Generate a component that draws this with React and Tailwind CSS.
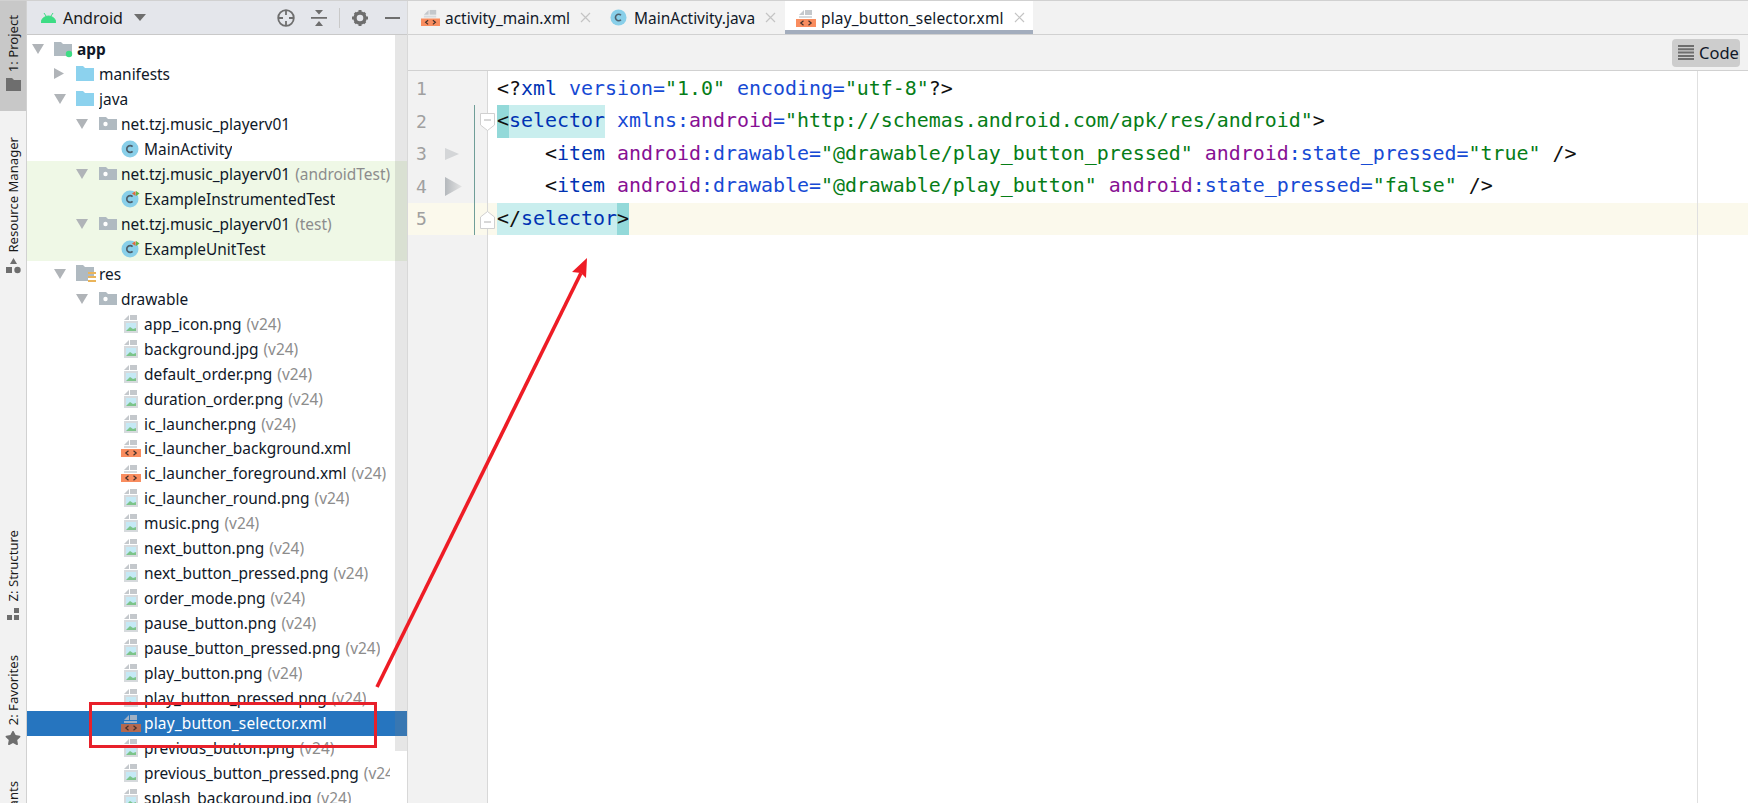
import { FaStar } from "react-icons/fa";

const uiFont = "font-['Noto_Sans','Open_Sans',sans-serif]";

const Tri = ({ dir = "down" }) =>
  dir === "down" ? (
    <svg width="13" height="11" viewBox="0 0 13 11"><path d="M0 1h12L6 11z" fill="#b0b4b8" /></svg>
  ) : (
    <svg width="13" height="11" viewBox="0 0 13 11"><path d="M0 0l10 5.5L0 11z" fill="#b0b4b8" /></svg>
  );

const AppFolder = () => (
  <svg width="20" height="18" viewBox="0 0 20 18">
    <path d="M0 2h7l2 2h9v12H0z" fill="#b0bac1" />
    <circle cx="15" cy="14" r="3.2" fill="#3ddc84" />
  </svg>
);

const BlueFolder = () => (
  <svg width="18" height="15" viewBox="0 0 18 15"><path d="M0 0h7l2 2h9v13H0z" fill="#8cd2ee" /></svg>
);

const PkgFolder = () => (
  <svg className="ml-px" width="18" height="13" viewBox="0 0 18 13">
    <path d="M0 0h7l2 2h9v11H0z" fill="#b0bac1" />
    <circle cx="6.5" cy="7" r="2.2" fill="#fff" />
  </svg>
);

const ResFolder = () => (
  <svg width="20" height="17" viewBox="0 0 20 17">
    <path d="M0 0h7l2 2h9v11H12v3H0z" fill="#b0bac1" />
    <path d="M12 7h8v2h-8zM12 11h8v2h-8zM12 15h8v2h-8z" fill="#eab45a" />
  </svg>
);

const ClassIcon = ({ test, size = 18 }) => (
  <svg width={size} height={size} viewBox="0 0 18 18" className="overflow-visible">
    <circle cx="9" cy="9" r="8.5" fill="#89cfe9" />
    <path d="M11.6 6.6A3.4 3.4 0 1 0 11.6 11.4" fill="none" stroke="#4e5f6b" strokeWidth="1.7" />
    {test && <path d="M11 3.5L14.5 1v5z" fill="#e0693c" />}
    {test && <path d="M15 1l3.5 2.5L15 6z" fill="#62b543" />}
  </svg>
);

const ImageFile = () => (
  <svg className="ml-[3px]" width="14" height="18" viewBox="0 0 14 18">
    <path d="M0 5l5-5v5z" fill="#c4c8cc" />
    <path d="M6 0h7v5H6z" fill="#c4c8cc" />
    <path d="M0 6h14v12H0z" fill="#d6dadd" />
    <path d="M2 8h10v8H2z" fill="#c5e9f5" />
    <path d="M2 16l4-4 3 2 3-1v3z" fill="#7cc48a" />
  </svg>
);

const XmlFile = ({ selected, size = 20 }) => (
  <svg width={size} height={size * 0.9} viewBox="0 0 20 18">
    <path d="M3 6l5-5v5z" fill={selected ? "#9fb0c4" : "#c4c8cc"} />
    <path d="M9 1h7v5H9z" fill={selected ? "#9fb0c4" : "#c4c8cc"} />
    <path d="M3 7h13v2H3z" fill={selected ? "#9fb0c4" : "#d6dadd"} />
    <path d="M0 10h20v8H0z" fill={selected ? "#b5694f" : "#f98d5f"} />
    <path d="M7.5 11.8L4.8 14l2.7 2.2M12.5 11.8l2.7 2.2-2.7 2.2" fill="none" stroke="#43302b" strokeWidth="1.2" />
  </svg>
);

const icons = {
  app: <AppFolder />,
  blue: <BlueFolder />,
  pkg: <PkgFolder />,
  res: <ResFolder />,
  cls: <ClassIcon />,
  test: <ClassIcon test />,
  img: <ImageFile />,
  xml: <XmlFile />,
  xmlSel: <XmlFile selected />,
};

const rows = [
  { d: 0, a: "down", i: "app", t: "app", bold: true },
  { d: 1, a: "right", i: "blue", t: "manifests" },
  { d: 1, a: "down", i: "blue", t: "java" },
  { d: 2, a: "down", i: "pkg", t: "net.tzj.music_playerv01" },
  { d: 3, i: "cls", t: "MainActivity" },
  { d: 2, a: "down", i: "pkg", t: "net.tzj.music_playerv01", h: "(androidTest)", green: true },
  { d: 3, i: "test", t: "ExampleInstrumentedTest", green: true },
  { d: 2, a: "down", i: "pkg", t: "net.tzj.music_playerv01", h: "(test)", green: true },
  { d: 3, i: "test", t: "ExampleUnitTest", green: true },
  { d: 1, a: "down", i: "res", t: "res" },
  { d: 2, a: "down", i: "pkg", t: "drawable" },
  { d: 3, i: "img", t: "app_icon.png", h: "(v24)" },
  { d: 3, i: "img", t: "background.jpg", h: "(v24)" },
  { d: 3, i: "img", t: "default_order.png", h: "(v24)" },
  { d: 3, i: "img", t: "duration_order.png", h: "(v24)" },
  { d: 3, i: "img", t: "ic_launcher.png", h: "(v24)" },
  { d: 3, i: "xml", t: "ic_launcher_background.xml" },
  { d: 3, i: "xml", t: "ic_launcher_foreground.xml", h: "(v24)" },
  { d: 3, i: "img", t: "ic_launcher_round.png", h: "(v24)" },
  { d: 3, i: "img", t: "music.png", h: "(v24)" },
  { d: 3, i: "img", t: "next_button.png", h: "(v24)" },
  { d: 3, i: "img", t: "next_button_pressed.png", h: "(v24)" },
  { d: 3, i: "img", t: "order_mode.png", h: "(v24)" },
  { d: 3, i: "img", t: "pause_button.png", h: "(v24)" },
  { d: 3, i: "img", t: "pause_button_pressed.png", h: "(v24)" },
  { d: 3, i: "img", t: "play_button.png", h: "(v24)" },
  { d: 3, i: "img", t: "play_button_pressed.png", h: "(v24)" },
  { d: 3, i: "xmlSel", t: "play_button_selector.xml", selected: true },
  { d: 3, i: "img", t: "previous_button.png", h: "(v24)" },
  { d: 3, i: "img", t: "previous_button_pressed.png", h: "(v24)" },
  { d: 3, i: "img", t: "splash_background.jpg", h: "(v24)" },
];

const indent = ["pl-[5px]", "pl-[27px]", "pl-[49px]", "pl-[72px]"];

const TreeRow = ({ row }) => {
  let bg = "";
  if (row.green) bg = "bg-[#eff8e6]";
  if (row.selected) bg = "bg-[#2675bf] text-white tracking-[0.17px]";
  return (
    <div className={`flex h-[24.98px] shrink-0 items-center whitespace-nowrap pr-[17px] ${indent[row.d]} ${bg}`}>
      <div className="flex w-[22px] shrink-0 items-center">{row.a && <Tri dir={row.a} />}</div>
      <div className="flex w-[23px] shrink-0 items-center">{icons[row.i]}</div>
      <div className="min-w-0 overflow-hidden leading-[24px]">
        <span className={row.bold ? "font-bold" : ""}>{row.t}</span>
        {row.h && <span className="ml-[5px] text-[#8c8c8c]">{row.h}</span>}
      </div>
    </div>
  );
};

const StripeLabel = ({ children }) => (
  <div className="rotate-180 whitespace-nowrap text-[13.1px] leading-[26px] text-[#1a1a1a] [writing-mode:vertical-rl]">{children}</div>
);

const Stripe = () => (
  <div className="flex h-full w-[27px] shrink-0 flex-col overflow-hidden border-r border-[#d1d1d1] bg-[#f2f2f2]">
    <div className="flex h-[110px] shrink-0 flex-col items-center bg-[#c8c8c8] pt-[14px]">
      <StripeLabel>1: Project</StripeLabel>
      <svg className="mt-[6px]" width="15" height="13" viewBox="0 0 15 13"><path d="M0 0h6l2 2h7v11H0z" fill="#6e6e6e" /></svg>
    </div>
    <div className="mt-[26px] flex shrink-0 flex-col items-center">
      <StripeLabel>Resource Manager</StripeLabel>
      <svg className="mt-[5px]" width="15" height="16" viewBox="0 0 15 16">
        <path d="M7.5 0l3.5 6H4z" fill="#6e6e6e" />
        <path d="M0 9h6v6H0z" fill="#6e6e6e" />
        <circle cx="11.5" cy="12" r="3.2" fill="#6e6e6e" />
      </svg>
    </div>
    <div className="mt-[256px] flex shrink-0 flex-col items-center">
      <StripeLabel>Z: Structure</StripeLabel>
      <svg className="mt-[7px]" width="13" height="12" viewBox="0 0 13 12">
        <path d="M7 0h5v5H7zM0 7h5v5H0zM7 7h5v5H7z" fill="#6e6e6e" />
      </svg>
    </div>
    <div className="mt-[35px] flex shrink-0 flex-col items-center">
      <StripeLabel>2: Favorites</StripeLabel>
      <FaStar className="mt-[5px] text-[#6e6e6e]" size={16} />
    </div>
    <div className="mt-[35px] flex shrink-0 flex-col items-center">
      <StripeLabel>Build Variants</StripeLabel>
    </div>
  </div>
);

const ProjectHeader = () => (
  <div className="flex h-[34px] shrink-0 items-center border-b border-[#c9c9c9] bg-[#e4e6eb] pl-[14px] text-[16px] leading-[24px] text-[#1a1a1a]">
    <svg width="15" height="10" viewBox="0 0 15 10"><path d="M0 10a7.5 7 0 0 1 15 0zM3 0l2 3M12 0l-2 3" fill="#3ddc84" stroke="#3ddc84" /></svg>
    <span className="ml-[7px]">Android</span>
    <svg className="ml-[11px]" width="12" height="7" viewBox="0 0 12 7"><path d="M0 0h12L6 7z" fill="#6e6e6e" /></svg>
    <svg className="ml-[131px]" width="18" height="18" viewBox="0 0 18 18" fill="none" stroke="#6e6e6e" strokeWidth="1.8">
      <circle cx="9" cy="9" r="7.8" />
      <path d="M9 1v5M9 12v5M1 9h5M12 9h5" />
    </svg>
    <svg className="ml-[16px]" width="16" height="16" viewBox="0 0 16 16" fill="#6e6e6e">
      <path d="M4 0h8L8 4.5zM0 7h16v1.8H0zM8 11l4 5H4z" />
    </svg>
    <div className="ml-[12px] h-[20px] w-px bg-[#c9c9c9]" />
    <svg className="ml-[12px]" width="16" height="16" viewBox="0 0 16 16">
      <circle cx="8" cy="8" r="5" fill="none" stroke="#6e6e6e" strokeWidth="3.4" />
      <path d="M6.5 0h3v3h-3zM6.5 13h3v3h-3zM0 6.5h3v3H0zM13 6.5h3v3h-3zM1.8 3.8l2-2 2 2-2 2zM10.2 3.8l2-2 2 2-2 2zM1.8 12.2l2-2 2 2-2 2zM10.2 12.2l2-2 2 2-2 2z" fill="#6e6e6e" />
    </svg>
    <div className="ml-[17px] h-[2px] w-[15px] bg-[#6e6e6e]" />
  </div>
);

const ProjectPanel = () => (
  <div className={`relative flex h-full w-[381px] shrink-0 flex-col overflow-hidden border-r border-[#d8d8d8] bg-white text-[15.45px] text-[#101828] ${uiFont}`}>
    <ProjectHeader />
    <div className="flex flex-col overflow-hidden pt-[1.5px]">
      {rows.map((row, i) => (
        <TreeRow key={i} row={row} />
      ))}
    </div>
    {/* scrollbar track */}
    <div className="absolute right-0 top-[34px] h-[716px] w-[12px] bg-[#80808033]" />
  </div>
);

const Tab = ({ icon, label, active, className }) => (
  <div className={`flex h-full items-center ${active ? "border-b-[4px] border-[#a3adbd] bg-white pt-[4px] tracking-[0.17px]" : ""} ${className}`}>
    {icon}
    <span className="ml-[5px] text-[15.45px] leading-[24px] text-[#101828]">{label}</span>
    <svg className="ml-[10px]" width="11" height="11" viewBox="0 0 11 11" stroke="#c4c4c4" strokeWidth="1.2"><path d="M1 1l9 9M10 1l-9 9" /></svg>
  </div>
);

const Tabs = () => (
  <div className="flex h-[34px] shrink-0 border-b border-[#d1d1d1] bg-[#f2f2f2]">
    <Tab className="pl-[13px]" icon={<XmlFile size={19} />} label="activity_main.xml" />
    <Tab className="pl-[19px]" icon={<span className="mr-[2px] flex"><ClassIcon size={17} /></span>} label="MainActivity.java" />
    <Tab active className="ml-[9px] pl-[11px] pr-[8px]" icon={<XmlFile size={20} />} label="play_button_selector.xml" />
  </div>
);

const Toolbar = () => (
  <div className="flex h-[36px] shrink-0 items-center justify-end border-b border-[#d1d1d1] bg-[#f2f2f2] pr-[8px]">
    <div className="flex h-[28px] w-[68px] items-center gap-[5px] rounded-[4px] bg-[#cdcdcd] pl-[6px] text-[16.5px] leading-[24px] text-[#101828]">
      <svg width="16" height="15" viewBox="0 0 16 15" fill="#6e6e6e"><path d="M0 0h16v2H0zM0 3.3h16v2H0zM0 6.6h16v2H0zM0 9.9h16v2H0zM0 13h16v2H0z" /></svg>
      Code
    </div>
  </div>
);

const Gray = ({ children }) => <span className="text-[#101010]">{children}</span>;
const Kw = ({ children }) => <span className="text-[#0033b3]">{children}</span>;
const Attr = ({ children }) => <span className="text-[#174ad4]">{children}</span>;
const Ns = ({ children }) => <span className="text-[#871094]">{children}</span>;
const Str = ({ children }) => <span className="text-[#067d17]">{children}</span>;

const Line1 = () => (
  <>
    <Gray>&lt;?</Gray>
    <Kw>xml</Kw>{" "}
    <Attr>version=</Attr>
    <Str>"1.0"</Str>{" "}
    <Attr>encoding=</Attr>
    <Str>"utf-8"</Str>
    <Gray>?&gt;</Gray>
  </>
);

const Line2 = () => (
  <>
    <span className="inline-block bg-[#93d9d9]"><Gray>&lt;</Gray></span>
    <span className="inline-block bg-[#c9eeee]"><Kw>selector</Kw></span>{" "}
    <Attr>xmlns:</Attr>
    <Ns>android</Ns>
    <Attr>=</Attr>
    <Str>"http://schemas.android.com/apk/res/android"</Str>
    <Gray>&gt;</Gray>
  </>
);

const ItemLine = ({ name, state }) => (
  <>
    {"    "}
    <Gray>&lt;</Gray>
    <Kw>item</Kw>{" "}
    <Ns>android</Ns>
    <Attr>:drawable=</Attr>
    <Str>"@drawable/{name}"</Str>{" "}
    <Ns>android</Ns>
    <Attr>:state_pressed=</Attr>
    <Str>"{state}"</Str>{" "}
    <Gray>/&gt;</Gray>
  </>
);

const Line5 = () => (
  <>
    <span className="inline-block bg-[#c9eeee]"><Gray>&lt;/</Gray><Kw>selector</Kw></span>
    <span className="inline-block bg-[#93d9d9]"><Gray>&gt;</Gray></span>
  </>
);

const lines = [
  <Line1 />,
  <Line2 />,
  <ItemLine name="play_button_pressed" state="true" />,
  <ItemLine name="play_button" state="false" />,
  <Line5 />,
];

const PlayMark = ({ big }) =>
  big ? (
    <svg width="18" height="19" viewBox="0 0 18 19">
      <defs>
        <linearGradient id="pm" x1="0" x2="1"><stop offset="0" stopColor="#b4b8bc" /><stop offset="1" stopColor="#e4e4e4" /></linearGradient>
      </defs>
      <path d="M0 0l17 9.5L0 19z" fill="url(#pm)" />
    </svg>
  ) : (
    <svg width="14" height="12" viewBox="0 0 14 12"><path d="M0 0l14 6-14 6z" fill="#d4d6d8" /></svg>
  );

const FoldMark = ({ up }) => (
  <svg className="absolute left-[72px] top-[8px] z-10" width="15" height="18" viewBox="0 0 15 18">
    <path d={up ? "M.5 17.5V6L7.5.5l7 5.5v11.5z" : "M.5.5h14V12l-7 5.5-7-5.5z"} fill="#fff" stroke="#d0d0d0" />
    <path d={up ? "M4 11h7" : "M4 7h7"} stroke="#b0b0b0" />
  </svg>
);

const Gutter = () => (
  <div className="flex h-full w-[80px] shrink-0 flex-col border-r border-[#d8d8d8] bg-[#f2f2f2] pt-[1.5px]">
    {lines.map((_, i) => (
      <div key={i} className={`relative flex h-[32.5px] items-center ${i === 4 ? "bg-[#fbf9ec]" : ""}`}>
        <span className="w-[37px] shrink-0 pl-[8px] text-[18px] text-[#a0a0a0]">{i + 1}</span>
        <div className="flex w-[29px] shrink-0 items-center">
          {i === 2 && <PlayMark />}
          {i === 3 && <PlayMark big />}
        </div>
        {i > 0 && <div className="h-full w-px bg-[#6f9e98]" />}
        {(i === 1 || i === 4) && <FoldMark up={i === 4} />}
      </div>
    ))}
  </div>
);

const Editor = () => (
  <div className="relative flex min-h-0 flex-1 bg-white font-['DejaVu_Sans_Mono',monospace] text-[19.93px]">
    <Gutter />
    <div className="flex min-w-0 flex-1 flex-col pt-[1.5px]">
      {lines.map((line, i) => (
        <div key={i} className={`h-[32.5px] whitespace-pre pl-[9px] leading-[32.5px] ${i === 4 ? "bg-[#fbf9ec]" : ""}`}>
          {line}
        </div>
      ))}
    </div>
    {/* right margin guide */}
    <div className="absolute bottom-0 right-[50px] top-0 w-px bg-[#e0e0e0]" />
  </div>
);

// red annotation drawn over the screenshot
const Annotation = () => (
  <>
    <div className="absolute left-[89px] top-[701px] h-[46px] w-[288px] border-[3px] border-[#e8202a]" />
    <svg className="pointer-events-none absolute inset-0 h-full w-full">
      <path d="M377 686L581 272" stroke="#ee1c25" strokeWidth="3.6" fill="none" />
      <path d="M587 257L586 277L581 272L572 271z" fill="#ee1c25" />
    </svg>
  </>
);

export default function App() {
  return (
    <div className={`relative flex h-screen w-screen overflow-hidden border-t border-[#d1d1d1] bg-white ${uiFont}`}>
      <Stripe />
      <ProjectPanel />
      <div className="flex h-full min-w-0 flex-1 flex-col">
        <Tabs />
        <Toolbar />
        <Editor />
      </div>
      <Annotation />
    </div>
  );
}
